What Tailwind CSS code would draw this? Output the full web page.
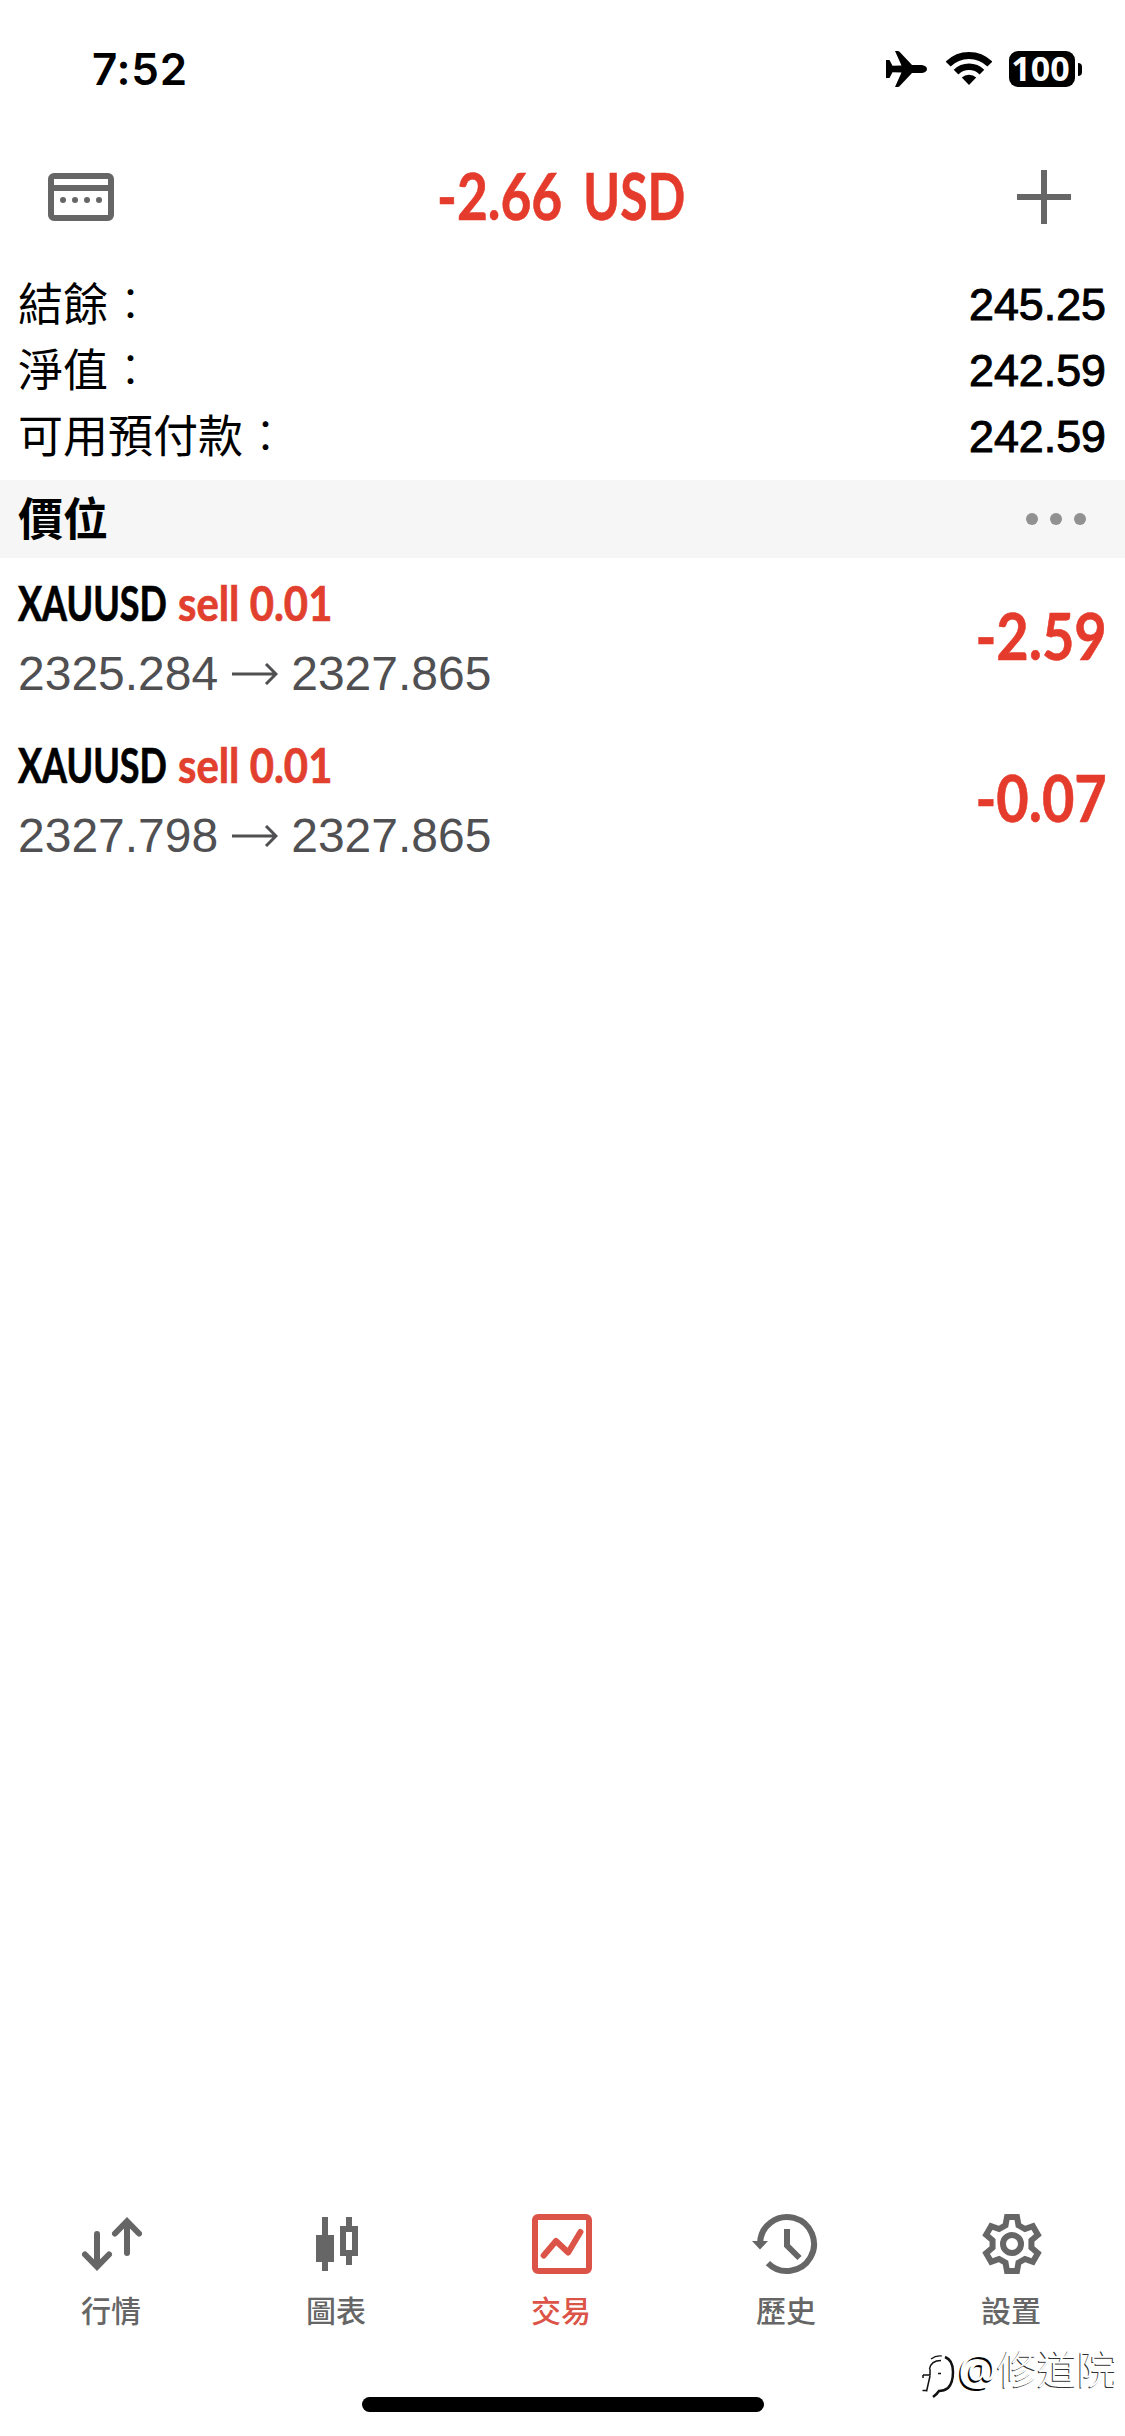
<!DOCTYPE html>
<html lang="zh-Hant">
<head>
<meta charset="utf-8">
<title>交易</title>
<script src="https://cdn.jsdelivr.net/npm/@tailwindcss/browser@4"></script>
</head>
<body class="bg-white">
<div class="relative flex flex-col w-[1125px] h-[2436px] overflow-hidden bg-white text-black font-['Liberation_Sans','Noto_Sans_CJK_TC',sans-serif]">

  <!-- status bar -->
  <div class="flex items-center justify-between h-[138px] pl-[92px] pr-[43px]">
    <div class="font-['Inter',sans-serif] font-semibold text-[44px] leading-none tracking-[0.700px]">7:52</div>
    <div class="flex items-center">
      <svg class="w-[41px] h-[36px]" viewBox="0 0 41 36"><path d="M9 0h2.500q1.500 0 2.500 1.200L26 14h10q5 1 5 4t-5 4H26L14 34.800Q13 36 11.500 36H9l6.500-14.500L6.500 21.200 3.500 27H0V9h3.500l3 5.800 9-.3z"/></svg>
      <svg class="w-[46px] h-[36px] ml-[19px]" viewBox="0 0 46 36"><g fill="none" stroke="#000"><path stroke-width="7" d="M2.140 13.140a29.500 29.500 0 0 1 41.720 0"/><path stroke-width="6.600" d="M10.060 21.060a18.300 18.300 0 0 1 25.880 0"/></g><path d="M23 34l-7.200-7.400a10.300 10.300 0 0 1 14.400 0z"/></svg>
      <div class="flex items-center justify-center w-[66px] h-[36px] pr-[3px] ml-[17px] rounded-[9px] bg-black text-white font-['Noto_Sans',sans-serif] font-bold text-[34px] leading-none"><span class="-mt-[2px]">100</span></div>
      <div class="w-[4px] h-[13px] ml-[3px] rounded-r-full bg-black"></div>
    </div>
  </div>

  <!-- title bar -->
  <div class="grid grid-cols-[1fr_auto_1fr] items-center h-[118px] pl-[48px] pr-[54px]">
    <svg class="w-[66px] h-[48px]" viewBox="0 0 66 48"><path fill="#666" fill-rule="evenodd" d="M6 0h54a6 6 0 0 1 6 6v36a6 6 0 0 1-6 6H6a6 6 0 0 1-6-6V6a6 6 0 0 1 6-6zM6 6v6h54V6zM6 18v24h54V18z"/><g fill="#666"><circle cx="15" cy="27" r="3"/><circle cx="27" cy="27" r="3"/><circle cx="39" cy="27" r="3"/><circle cx="51" cy="27" r="3"/></g></svg>
    <div class="flex w-[250px] pl-[2px] pb-[4px] whitespace-nowrap font-['Lato',sans-serif] font-bold text-[65px] leading-none text-[#e53b2c] [-webkit-text-stroke:0.600px]"><span class="flex w-[124px]"><span class="inline-block origin-left scale-x-[0.820]">-2.66</span></span> <span class="flex justify-end w-[125px]"><span class="inline-block origin-right scale-x-[0.765]">USD</span></span></div>
    <svg class="w-[54px] h-[54px] justify-self-end" viewBox="0 0 54 54"><path stroke="#666" stroke-width="6" d="M27 0v54M0 27h54"/></svg>
  </div>

  <!-- account summary -->
  <div class="flex flex-col h-[224px] pt-[15px] pl-[18px] pr-[19px] text-[45px] leading-[66px]">
    <div class="flex justify-between"><span class="pt-[2px] -mb-[2px]">結餘<span class="font-light">：</span></span><span class="text-[44.800px] [-webkit-text-stroke:1px]">245.25</span></div>
    <div class="flex justify-between"><span class="pt-[2px] -mb-[2px]">淨值<span class="font-light">：</span></span><span class="text-[44.800px] [-webkit-text-stroke:1px]">242.59</span></div>
    <div class="flex justify-between"><span class="pt-[2px] -mb-[2px]">可用預付款<span class="font-light">：</span></span><span class="text-[44.800px] [-webkit-text-stroke:1px]">242.59</span></div>
  </div>

  <!-- positions header -->
  <div class="flex items-center justify-between h-[78px] pl-[18px] pr-[39px] bg-[#f6f6f6]">
    <span class="pt-[3px] font-bold text-[45px] leading-[66px]">價位</span>
    <span class="flex gap-[12px]"><i class="size-[12px] rounded-full bg-[#919191]"></i><i class="size-[12px] rounded-full bg-[#919191]"></i><i class="size-[12px] rounded-full bg-[#919191]"></i></span>
  </div>

  <!-- positions -->
  <div class="flex items-center justify-between h-[159px] pb-[3px] pl-[18px] pr-[18px]">
    <div class="flex flex-col gap-[14px] pt-[5px]">
      <div class="flex h-[56px] items-center whitespace-nowrap font-['Lato',sans-serif] font-bold text-[47px] leading-none [-webkit-text-stroke:0.700px]">
        <span class="w-[160px]"><span class="inline-block origin-left scale-x-[0.765]">XAUUSD</span></span>
        <span class="w-[160px] text-[#e2402f]"><span class="inline-block origin-left scale-x-[0.890]">sell 0.01</span></span>
      </div>
      <div class="flex h-[56px] items-center text-[48px] leading-none text-[#505053]"><span>2325.284</span>
        <svg class="w-[46px] h-[22px] mx-[13.500px]" viewBox="0 0 46 22"><path fill="none" stroke="#505053" stroke-width="3" d="M0 11h44M34 1l10 10-10 10"/></svg><span>2327.865</span></div>
    </div>
    <span class="inline-block origin-right scale-x-[0.860] -mt-px font-['Lato',sans-serif] font-bold text-[65px] leading-none text-[#e53b2c] [-webkit-text-stroke:0.600px]">-2.59</span>
  </div>
  <div class="flex items-center justify-between h-[162px] pl-[18px] pr-[18px]">
    <div class="flex flex-col gap-[14px] pt-[5px]">
      <div class="flex h-[56px] items-center whitespace-nowrap font-['Lato',sans-serif] font-bold text-[47px] leading-none [-webkit-text-stroke:0.700px]">
        <span class="w-[160px]"><span class="inline-block origin-left scale-x-[0.765]">XAUUSD</span></span>
        <span class="w-[160px] text-[#e2402f]"><span class="inline-block origin-left scale-x-[0.890]">sell 0.01</span></span>
      </div>
      <div class="flex h-[56px] items-center text-[48px] leading-none text-[#505053]"><span>2327.798</span>
        <svg class="w-[46px] h-[22px] mx-[13.500px]" viewBox="0 0 46 22"><path fill="none" stroke="#505053" stroke-width="3" d="M0 11h44M34 1l10 10-10 10"/></svg><span>2327.865</span></div>
    </div>
    <span class="inline-block origin-right scale-x-[0.860] -mt-px font-['Lato',sans-serif] font-bold text-[65px] leading-none text-[#e53b2c] [-webkit-text-stroke:0.600px]">-0.07</span>
  </div>

  <div class="flex-1"></div>

  <!-- tab bar -->
  <div class="grid grid-cols-5 h-[183px] text-[30px] leading-[40px] text-[#666] font-medium font-['Noto_Sans_CJK_TC',sans-serif]">
    <div class="flex flex-col items-center gap-[15px]">
      <svg class="w-[69px] h-[60px]" viewBox="0 0 69 60" fill="none" stroke="#666" stroke-width="6" stroke-linecap="round"><path d="M19 20v32M7 40.500l12 12.200 12-12.200M49 39V9M37 19.500L49 7.200l12 12.300"/></svg>
      <span class="pr-[3px]">行情</span>
    </div>
    <div class="flex flex-col items-center gap-[15px]">
      <svg class="w-[69px] h-[60px]" viewBox="0 0 69 60" fill="#666"><path fill-rule="evenodd" d="M19 3h6v18h6v27h-6v9h-6v-9h-6V21h6zM43 3h6v9h6v30h-6v9h-6v-9h-6V12h6zM43 18v18h6V18z"/></svg>
      <span class="pr-[3px]">圖表</span>
    </div>
    <div class="flex flex-col items-center gap-[15px] text-[#dc5347]">
      <svg class="w-[69px] h-[60px]" viewBox="0 0 69 60"><path fill="#dc5347" fill-rule="evenodd" d="M10 0h48a6 6 0 0 1 6 6v48a6 6 0 0 1-6 6H10a6 6 0 0 1-6-6V6a6 6 0 0 1 6-6zM10 6v48h48V6z"/><path fill="none" stroke="#dc5347" stroke-width="6" stroke-linecap="round" stroke-linejoin="round" d="M15.700 41.500l12.300-14.500 12.200 11.500 12.200-20.500"/></svg>
      <span class="pr-[3px]">交易</span>
    </div>
    <div class="flex flex-col items-center gap-[15px]">
      <svg class="w-[69px] h-[60px] overflow-visible" viewBox="0 0 69 60"><path fill="none" stroke="#666" stroke-width="6" d="M7 30A27 27 0 1 1 14.900 49.100M34 15v16.500l12.500 12.500"/><path fill="#666" d="M-1 27h16l-8 8.500z"/></svg>
      <span class="pr-[3px]">歷史</span>
    </div>
    <div class="flex flex-col items-center gap-[15px]">
      <svg class="w-[69px] h-[60px]" viewBox="-34 -30 69 60" fill="none" stroke="#666" stroke-width="6"><path d="M-5-27H5L6.500-18.700 12.950-14.980 20.880-17.830 25.880-9.170 19.440-3.720V3.720L25.880 9.170 20.880 17.830 12.950 14.980 6.500 18.700 5 27H-5L-6.500 18.700-12.950 14.980-20.880 17.830-25.880 9.170-19.440 3.720V-3.720L-25.880-9.170-20.880-17.830-12.950-14.980-6.500-18.700z"/><circle r="9"/></svg>
      <span class="pr-[3px]">設置</span>
    </div>
  </div>
  <div class="h-[39px] flex justify-center"><div class="w-[402px] h-[15px] rounded-full bg-black"></div></div>

  <!-- author watermark -->
  <div class="absolute left-[920px] top-[2344px] flex items-start h-[56px] whitespace-nowrap text-white font-['Noto_Sans_CJK_TC',sans-serif] font-light text-[40px] leading-[48px]">
    <svg class="w-[36px] h-[48px] mt-[6px]" viewBox="0 0 36 48" fill="none" stroke="#111"><path stroke-width="1.500" d="M9.500 19Q11 10.500 21 10.500M3 25h7v-6M10 26L6.500 41.500M3 25v3M2.500 40.500H6M18 23.500h3"/><path stroke-width="1.200" d="M11 9q5-4 11-3"/><path stroke-width="2.500" d="M25 7q8 3 8 15 0 11-5 16-4 3-9 3-2 3-6 6"/></svg>
    <span class="ml-[2px] w-[39px] font-['Noto_Sans',sans-serif] text-[44px] font-normal tracking-[-2px] [text-shadow:-1.500px_1.500px_0_#000]">@</span><span class="-mt-px [text-shadow:-1px_1px_0_#333]">修道院</span>
  </div>
</div>
</body>
</html>
